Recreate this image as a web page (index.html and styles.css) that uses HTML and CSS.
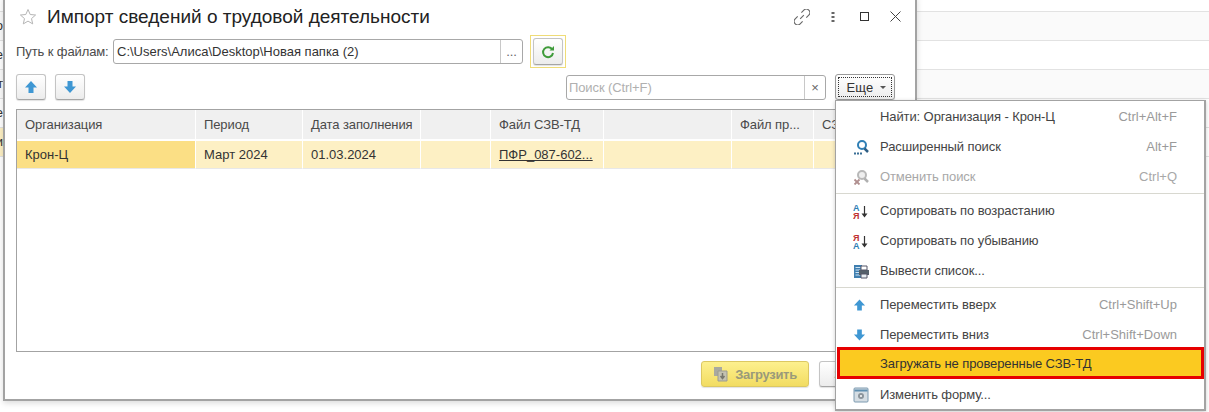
FILE: index.html
```html
<!DOCTYPE html>
<html lang="ru">
<head>
<meta charset="utf-8">
<title>Импорт сведений о трудовой деятельности</title>
<link rel="stylesheet" href="styles.css">
</head>
<body>
<div class="backdrop">
  <div class="bg-row"></div>
  <div class="bg-row alt"><span class="bg-cell">о</span></div>
  <div class="bg-row"><span class="bg-cell">е</span></div>
  <div class="bg-row alt"><span class="bg-cell">т</span></div>
  <div class="bg-row"><span class="bg-cell">е</span></div>
  <div class="bg-row"><span class="bg-cell cur">и.</span></div>
</div>

<section class="dialog">
  <header class="titlebar">
    <svg class="star" viewBox="0 0 18 18" width="18" height="18"><path d="M9 1.500l2.200 5 5.400.5-4.100 3.600 1.200 5.300L9 13.100l-4.700 2.800 1.200-5.300L1.400 7l5.400-.5z" fill="none" stroke="#b5b5b5"/></svg>
    <h1 class="title">Импорт сведений о трудовой деятельности</h1>
    <div class="win-tools">
      <svg class="link-ico" viewBox="1.500 1.500 13 13" width="16" height="16"><path d="M6.500 9.500l3-3M7.500 4.500l2-2a2.600 2.600 0 0 1 4 4l-2 2M8.500 11.500l-2 2a2.600 2.600 0 0 1-4-4l2-2" fill="none" stroke="#666" stroke-width=".9"/></svg>
      <svg class="dots-ico" viewBox="0 0 4 12" width="4" height="12"><path d="M0.500 1h3v2h-3zM0.500 5h3v2h-3zM0.500 9h3v2h-3z" fill="#666"/></svg>
      <span class="max-ico"></span>
      <svg class="close-ico" viewBox="0 0 11 11" width="11" height="11"><path d="M.5.500l10 10M10.500.500l-10 10" stroke="#444" fill="none"/></svg>
    </div>
  </header>

  <div class="path-row">
    <span class="label">Путь к файлам:</span>
    <div class="field path-field"><span class="field-text path-text">C:\Users\Алиса\Desktop\Новая папка (2)</span><span class="field-btn">...</span></div>
    <div class="focus-ring"><button class="btn refresh"><svg viewBox="0 0 14 14" width="14" height="14"><path d="M11.300 4.500A5 5 0 1 0 12 8" fill="none" stroke="#3f9b3a" stroke-width="2"/><path d="M8.500 5.500h4.500V1z" fill="#3f9b3a"/></svg></button></div>
  </div>

  <div class="tool-row">
    <button class="btn arrow-btn"><svg viewBox="0 0 14 14" width="14" height="14"><path d="M7 1l6 6.500H9.500V13h-5V7.500H1z" fill="#3f97d3"/></svg></button>
    <button class="btn arrow-btn"><svg viewBox="0 0 14 14" width="14" height="14"><path d="M7 13L1 6.500h3.500V1h5v5.500H13z" fill="#3f97d3"/></svg></button>
    <div class="spacer"></div>
    <div class="field search-field"><span class="field-text placeholder">Поиск (Ctrl+F)</span><span class="field-btn clear">×</span></div>
    <button class="btn more-btn"><span class="more-inner">Еще <i class="caret"></i></span></button>
  </div>

  <div class="table">
    <div class="cell head">Организация</div>
    <div class="cell head">Период</div>
    <div class="cell head">Дата заполнения</div>
    <div class="cell head"></div>
    <div class="cell head">Файл СЗВ-ТД</div>
    <div class="cell head"></div>
    <div class="cell head">Файл пр...</div>
    <div class="cell head">СЗВ-ТД</div>
    <div class="cell data current">Крон-Ц</div>
    <div class="cell data">Март 2024</div>
    <div class="cell data">01.03.2024</div>
    <div class="cell data"></div>
    <div class="cell data"><u>ПФР_087-602...</u></div>
    <div class="cell data"></div>
    <div class="cell data"></div>
    <div class="cell data"></div>
  </div>

  <footer class="footer">
    <button class="btn primary"><svg viewBox="0 0 16 16" width="16" height="16"><path d="M1 1h8v9H1z" fill="#a9a9a0"/><path d="M5 5h9v10H5z" fill="#c4c2b0" stroke="#9b9b90"/><path d="M9.500 7v4.500M7.500 10l2 2.500 2-2.500" stroke="#77776c" fill="none" stroke-width="1.500"/></svg>Загрузить</button>
    <button class="btn close-btn">Закрыть</button>
  </footer>
</section>

<nav class="menu">
  <div class="item"><span class="ico"></span><span class="name">Найти: Организация - Крон-Ц</span><span class="key">Ctrl+Alt+F</span></div>
  <div class="item"><span class="ico"><svg viewBox="0 0 16 16" width="16" height="16"><circle cx="9" cy="6" r="4" fill="#fff" stroke="#2f7fb5" stroke-width="2"/><path d="M11.500 9.500l3.500 3.500" stroke="#2f5f85" stroke-width="2.500"/><path d="M1 13.500h2v2H1zM4 13.500h2v2H4zM7 13.500h2v2H7z" fill="#3a6f96"/></svg></span><span class="name">Расширенный поиск</span><span class="key">Alt+F</span></div>
  <div class="item off"><span class="ico"><svg viewBox="0 0 16 16" width="16" height="16"><circle cx="9" cy="6" r="4" fill="#eee" stroke="#b8b8b8" stroke-width="2"/><path d="M11.500 9.500l3.500 3.500" stroke="#b0b0b0" stroke-width="2.500"/><path d="M1.500 10.500l5 5M6.500 10.500l-5 5" stroke="#b08f8f" stroke-width="1.800"/></svg></span><span class="name">Отменить поиск</span><span class="key">Ctrl+Q</span></div>
  <div class="sep"></div>
  <div class="item"><span class="ico"><svg viewBox="0 0 16 16" width="16" height="16"><text class="sort-a" x="0" y="7.500" fill="#2f7fb5">А</text><text class="sort-a" x="0" y="15.500" fill="#c03030">Я</text><path d="M11.500 3v8" stroke="#333" stroke-width="1.200"/><path d="M8.500 10.500h6l-3 4z" fill="#333"/></svg></span><span class="name">Сортировать по возрастанию</span></div>
  <div class="item"><span class="ico"><svg viewBox="0 0 16 16" width="16" height="16"><text class="sort-a" x="0" y="7.500" fill="#c03030">Я</text><text class="sort-a" x="0" y="15.500" fill="#2f7fb5">А</text><path d="M11.500 3v8" stroke="#333" stroke-width="1.200"/><path d="M8.500 10.500h6l-3 4z" fill="#333"/></svg></span><span class="name">Сортировать по убыванию</span></div>
  <div class="item"><span class="ico"><svg viewBox="0 0 16 16" width="16" height="16"><path d="M1 2h8v13H1z" fill="#3f7fb0"/><path d="M2.500 4.500h5M2.500 7h5M2.500 9.500h5M2.500 12h5" stroke="#cfe3f2"/><path d="M6 7h10v5H6z" fill="#55606a"/><path d="M8 3h6v4H8z" fill="#fff" stroke="#556"/><path d="M8 11h6v4H8z" fill="#e8eef2" stroke="#556"/></svg></span><span class="name">Вывести список...</span></div>
  <div class="sep"></div>
  <div class="item"><span class="ico"><svg viewBox="0 0 14 14" width="13" height="14"><path d="M7 1l6 6.500H9.500V13h-5V7.500H1z" fill="#3f97d3"/></svg></span><span class="name">Переместить вверх</span><span class="key">Ctrl+Shift+Up</span></div>
  <div class="item"><span class="ico"><svg viewBox="0 0 14 14" width="13" height="14"><path d="M7 13L1 6.500h3.500V1h5v5.500H13z" fill="#3f97d3"/></svg></span><span class="name">Переместить вниз</span><span class="key">Ctrl+Shift+Down</span></div>
  <div class="item marked"><span class="ico"></span><span class="name">Загружать не проверенные СЗВ-ТД</span></div>
  <div class="item"><span class="ico"><svg viewBox="0 0 16 16" width="16" height="16"><rect x="1" y="1" width="14" height="14" rx="1" fill="#d5dde3" stroke="#7c9ab0"/><path d="M1.500 3.500h13" stroke="#5f8fb0" stroke-width="2"/><circle cx="8" cy="9" r="3" fill="#8b949b"/><circle cx="8" cy="9" r="1" fill="#fff"/></svg></span><span class="name">Изменить форму...</span></div>
</nav>
</body>
</html>
```
FILE: styles.css
```css
* { box-sizing: border-box; }
html, body { margin: 0; padding: 0; }
body {
  width: 1209px;
  height: 412px;
  position: relative;
  overflow: hidden;
  background: #fff;
  font-family: "Liberation Sans", Arial, sans-serif;
  font-size: 13px;
  letter-spacing: -.1px;
  color: #333;
}
.backdrop { display: flex; flex-direction: column; }
.bg-row { height: 29px; border-bottom: 1px solid #e2e2e2; }
.bg-row:first-child { height: 12px; }
.bg-row.alt { background: #fafafa; }
.bg-cell {
  display: block;
  width: 3px;
  height: 28px;
  overflow: hidden;
  direction: rtl;
  line-height: 28px;
  white-space: nowrap;
  color: #333;
}
.bg-cell.cur { background: #fdf0c4; }

.dialog {
  position: absolute;
  left: 3px;
  top: -4px;
  width: 914px;
  height: 405px;
  display: flex;
  flex-direction: column;
  background: #fff;
  border: 1px solid #a3a3a3;
  border-width: 0 2px 2px 2px;
  box-shadow: 0 2px 6px rgba(0,0,0,.15);
  padding: 0 10px 0 11px;
}
.titlebar { height: 38px; display: flex; align-items: center; padding: 3px 0 0 3px; flex: none; }
.star { flex: none; margin-right: 10px; }
.title { margin: 0; font-size: 19px; font-weight: 400; color: #222; letter-spacing: 0; }
.win-tools { margin-left: auto; display: flex; align-items: center; padding-right: 4px; }
.link-ico { margin-right: 21px; }
.dots-ico { margin-right: 25px; }
.max-ico { width: 9px; height: 9px; border: 1px solid #333; margin-right: 21px; }
.path-row { display: flex; align-items: center; height: 33px; margin-top: 1px; flex: none; }
.label { color: #4a4a4a; width: 97px; flex: none; }
.field {
  display: flex;
  align-items: stretch;
  background: #fff;
  border: 1px solid #a8a8a8;
  border-radius: 3px;
  height: 25px;
}
.field-text { flex: 1; padding: 0 3px; line-height: 23px; white-space: nowrap; overflow: hidden; color: #333; }
.path-text { letter-spacing: 0; }
.placeholder { color: #b0b0b0; padding-left: 2px; }
.field-btn { width: 22px; border-left: 1px solid #c8c8c8; text-align: center; line-height: 23px; color: #666; flex: none; }
.path-field { width: 410px; }
.focus-ring {
  width: 36px;
  height: 33px;
  margin-left: 7px;
  border: 1px solid #efdc78;
  display: flex;
  align-items: center;
  justify-content: center;
}
.btn {
  font: inherit;
  letter-spacing: inherit;
  color: #333;
  border: 1px solid #c4c4c4;
  border-bottom-color: #a5a5a5;
  border-radius: 3px;
  background: linear-gradient(#fff, #ececec);
  box-shadow: 0 1px 1px rgba(0,0,0,.12);
  padding: 0;
  display: flex;
  align-items: center;
  justify-content: center;
}
.refresh { width: 30px; height: 27px; }
.tool-row { display: flex; align-items: center; height: 26px; margin-top: 6px; gap: 9px; flex: none; }
.arrow-btn { width: 30px; height: 26px; }
.spacer { flex: 1; }
.search-field { width: 260px; height: 25px; }
.clear { width: 21px; }
.more-btn { width: 60px; height: 26px; margin-right: 10px; padding: 2px; border-color: #9a9a9a; letter-spacing: .2px; }
.more-inner { width: 100%; height: 100%; border: 1px dotted #333; display: flex; align-items: center; justify-content: center; gap: 6px; padding-left: 2px; }
.caret { width: 0; height: 0; border: 3px solid transparent; border-top-color: #555; border-bottom: 0; }

.table {
  margin-top: 9px;
  height: 243px;
  flex: none;
  border: 1px solid #a3a3a3;
  display: grid;
  grid-template-columns: 179px 107px 118px 70px 113px 128px 82px 1fr;
  grid-auto-rows: min-content;
  overflow: hidden;
}
.cell { padding: 0 8px; white-space: nowrap; overflow: hidden; border-right: 1px solid #fff; }
.head { height: 31px; line-height: 29px; background: #f0f0f0; color: #4a4a4a; border-bottom: 2px solid #fff; }
.head:nth-child(8) { border-right: 0; }
.data { height: 28px; line-height: 28px; letter-spacing: 0; background: #fdf0c4; border-bottom: 1px solid #e8e8e8; color: #333; }
.current { background: #fbdf85; }

.footer { display: flex; align-items: center; gap: 10px; height: 44px; padding-left: 685px; flex: none; }
.btn.primary {
  width: 108px;
  height: 26px;
  gap: 6px;
  flex: none;
  font-weight: 700;
  letter-spacing: -.3px;
  color: #9a9a7a;
  background: linear-gradient(#fdf08e, #f2dc62);
  border-color: #dcc862;
}
.close-btn { width: 80px; height: 26px; flex: none; }

.menu {
  position: absolute;
  left: 835px;
  top: 100px;
  width: 371px;
  height: 311px;
  background: #fff;
  border: 1px solid #a3a3a3;
  border-width: 1px 2px 2px 1px;
  box-shadow: 0 1px 4px rgba(0,0,0,.2);
  display: flex;
  flex-direction: column;
}
.item { height: 30px; flex: none; display: flex; align-items: center; padding: 1px 27px 0 0; color: #444; }
.ico { width: 44px; flex: none; padding-left: 17px; display: flex; align-items: center; }
.name { flex: 1; white-space: nowrap; }
.key { color: #9a9a9a; white-space: nowrap; letter-spacing: 0; }
.off .name { color: #a8a8a8; }
.off .key { color: #a8a8a8; }
.sep { height: 1px; background: #d8d8d0; margin: 2px 0 1px; flex: none; }
.marked { background: #fbca20; border: 3px solid #e60000; color: #333; height: 32px; margin: -2px 0 0 1px; width: 367px; padding: 0; }
.marked .ico { width: 40px; }
.sort-a { font-family: "Liberation Sans", sans-serif; font-size: 9px; font-weight: 700; letter-spacing: 0; }
```
